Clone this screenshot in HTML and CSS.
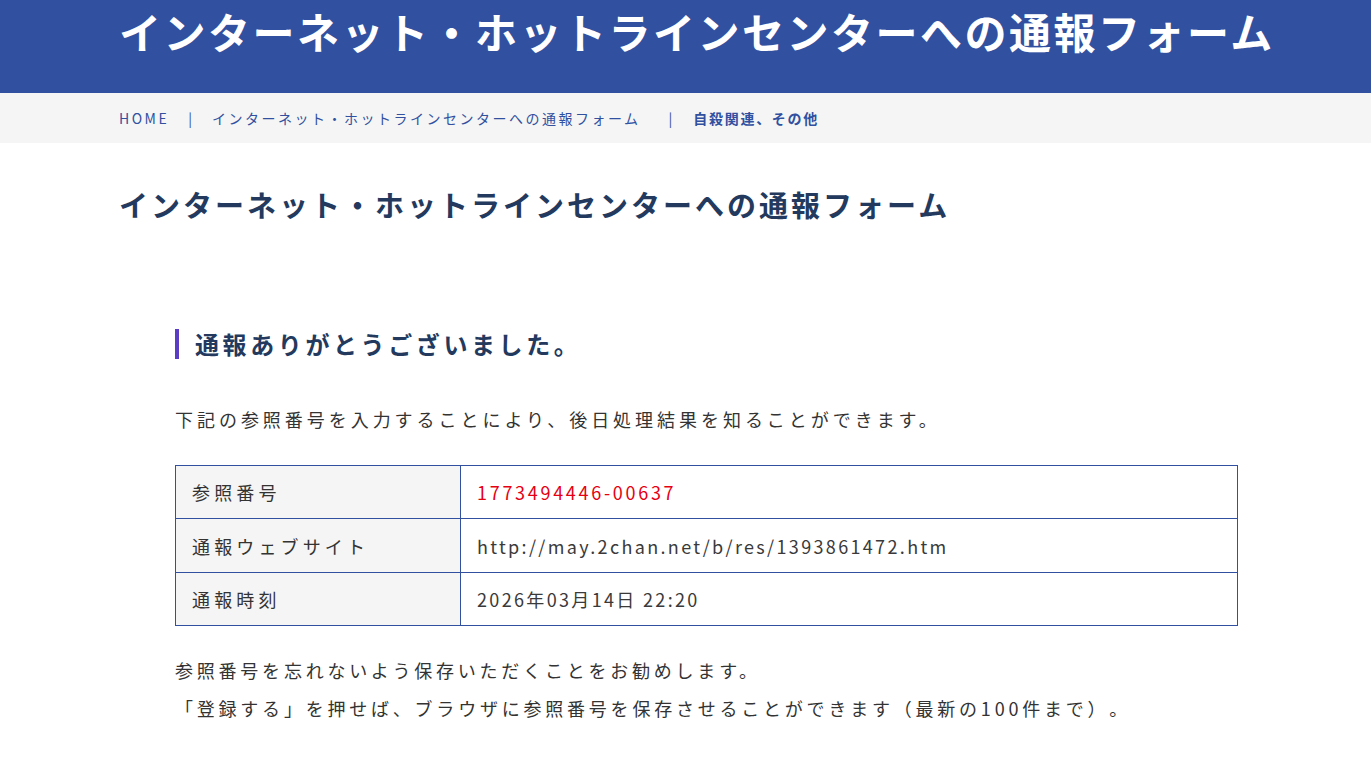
FILE: index.html
```html
<!DOCTYPE html>
<html lang="ja">
    <head>
        <meta charset="utf-8">
        <title>インターネット・ホットラインセンターへの通報フォーム</title>
        <link rel="stylesheet" href="styles.css">
    </head>
  <body>
    <header id="header">
        <div class="inner">
            <h1 class="site-title">インターネット・ホットラインセンターへの通報フォーム</h1>
        </div>
    </header>
    <nav id="breadcrumb">
        <div class="inner">
            <a class="crumb">HOME</a>
            <span class="sep">|</span>
            <a class="crumb">インターネット・ホットラインセンターへの通報フォーム</a>
            <span class="sep sep-wide">|</span>
            <span class="crumb current">自殺関連、その他</span>
        </div>
    </nav>
    <main id="main">
        <div class="inner">
            <h2 class="page-title">インターネット・ホットラインセンターへの通報フォーム</h2>
            <section class="result">
                <h3 class="result-title">通報ありがとうございました。</h3>
                <p class="lead">下記の参照番号を入力することにより、後日処理結果を知ることができます。</p>
                <table class="info">
                    <tr>
                        <th>参照番号</th>
                        <td class="ref">1773494446-00637</td>
                    </tr>
                    <tr>
                        <th>通報ウェブサイト</th>
                        <td>http://may.2chan.net/b/res/1393861472.htm</td>
                    </tr>
                    <tr>
                        <th>通報時刻</th>
                        <td>2026年03月14日 22:20</td>
                    </tr>
                </table>
                <p class="note">参照番号を忘れないよう保存いただくことをお勧めします。</p>
                <p class="note">「登録する」を押せば、ブラウザに参照番号を保存させることができます（最新の100件まで）。</p>
            </section>
        </div>
    </main>
  </body>
</html>
```

FILE: styles.css
```css
* {
    margin: 0;
    padding: 0;
    box-sizing: border-box;
}
html, body {
    height: 100%;
}
body {
    font-family: "Noto Sans CJK JP", "Noto Sans", sans-serif;
    color: #333;
    background: #fff;
    text-spacing-trim: space-all;
}
.inner {
    padding: 0 119px;
}
#header {
    height: 93px;
    background: #3150a0;
    color: #fff;
}
#header .inner {
    padding-right: 40px;
}
.site-title {
    font-size: 42px;
    font-weight: bold;
    letter-spacing: 2.5px;
    line-height: 61px;
    white-space: nowrap;
}
#breadcrumb {
    height: 50px;
    background: #f5f5f5;
    font-size: 14px;
    line-height: 50px;
    color: #3150a0;
}
#breadcrumb .inner {
    display: flex;
    align-items: center;
    white-space: nowrap;
}
.crumb {
    letter-spacing: 2.5px;
}
.current {
    font-weight: bold;
    letter-spacing: 1.7px;
}
.sep {
    margin: 0 20px 0 19px;
    color: #3150a0;
}
.sep-wide {
    margin: 0 21px 0 28px;
}
.page-title {
    margin-top: 36px;
    font-size: 29px;
    font-weight: bold;
    letter-spacing: 3px;
    line-height: 50px;
    color: #233a5e;
    white-space: nowrap;
}
.result {
    margin: 100px 0 0 56px;
    width: 1063px;
}
.result-title {
    padding-left: 16px;
    border-left: 4px solid #5b3cc4;
    font-size: 24px;
    font-weight: bold;
    letter-spacing: 0.15em;
    line-height: 30px;
    color: #233a5e;
}
.lead {
    margin-top: 44px;
    font-size: 18px;
    letter-spacing: 0.22em;
    line-height: 32px;
}
.info {
    width: 100%;
    margin-top: 30px;
    border-collapse: collapse;
    font-size: 18px;
}
.info th, .info td {
    height: 53.4px;
    padding: 0 16px;
    border: 1px solid #3150a0;
    text-align: left;
    font-weight: normal;
}
.info th {
    width: 285px;
    background: #f5f5f5;
    letter-spacing: 0.23em;
}
.info td {
    letter-spacing: 0.13em;
    color: #3a3a3a;
}
.info .ref {
    color: #e60012;
    letter-spacing: 0.15em;
}
.note {
    font-size: 18px;
    letter-spacing: 0.21em;
    line-height: 38px;
}
.result .info + .note {
    margin-top: 25px;
}
```
